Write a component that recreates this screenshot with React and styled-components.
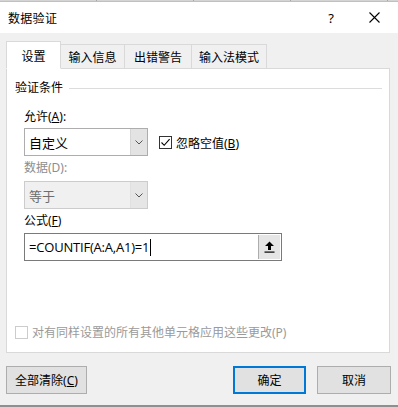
import React from "react";
import styled, { createGlobalStyle } from "styled-components";

const GlobalStyle = createGlobalStyle`
  html, body { margin: 0; padding: 0; }
  body {
    font-family: "Noto Sans", "Noto Sans CJK SC", sans-serif;
    font-size: 12px;
    color: #000;
  }
`;

const tabs = [
  { label: "设置", width: 55, active: true },
  { label: "输入信息", width: 64 },
  { label: "出错警告", width: 67 },
  { label: "输入法模式", width: 75 },
];

export default function App() {
  return (
    <>
      <GlobalStyle />
      <Window>
        <TopEdge />
        <TitleBar>
          <Title>数据验证</Title>
          <TitleButtons>
            <HelpMark>?</HelpMark>
            <svg width="11" height="11" viewBox="0 0 11 11">
              <path d="M0.5 0.5 L10.5 10.5 M10.5 0.5 L0.5 10.5" stroke="#000" strokeWidth="1.1" />
            </svg>
          </TitleButtons>
        </TitleBar>
        <Body>
          <TabStrip>
            {tabs.map((t) => (
              <Tab key={t.label} $active={t.active} $width={t.width}>
                {t.label}
              </Tab>
            ))}
          </TabStrip>
          <Panel>
            <GroupHeader>
              <span>验证条件</span>
              <GroupLine />
            </GroupHeader>
            <FieldLabel $top={14}>
              允许(<u>A</u>):
            </FieldLabel>
            <Row>
              <Select>
                <SelectText>自定义</SelectText>
                <DropButton>
                  <Chevron />
                </DropButton>
              </Select>
              <CheckLine>
                <CheckBox>
                  <svg width="11" height="11" viewBox="0 0 11 11">
                    <path d="M1.5 5.5 L4.2 8.3 L9.6 2.2" fill="none" stroke="#000" strokeWidth="1.1" />
                  </svg>
                </CheckBox>
                <span>
                  忽略空值(<u>B</u>)
                </span>
              </CheckLine>
            </Row>
            <FieldLabel $top={4} $disabled>
              数据(D):
            </FieldLabel>
            <Select $disabled>
              <SelectText $disabled>等于</SelectText>
              <DropButton $disabled>
                <Chevron />
              </DropButton>
            </Select>
            <FieldLabel $top={4}>
              公式(<u>F</u>)
            </FieldLabel>
            <FormulaBox>
              <FormulaText>
                =COUNTIF(A:A,A1)=1<Caret />
              </FormulaText>
              <RefButton>
                <svg width="11" height="12" viewBox="0 0 11 12">
                  <path d="M5.5 0.5 L10 5 L7 5 L7 9 L4 9 L4 5 L1 5 Z" fill="#000" />
                  <rect x="0.5" y="10.5" width="10" height="1.2" fill="#000" />
                </svg>
              </RefButton>
            </FormulaBox>
            <Spacer />
            <BottomCheck>
              <CheckBox $disabled />
              <span>对有同样设置的所有其他单元格应用这些更改(P)</span>
            </BottomCheck>
          </Panel>
        </Body>
        <Footer>
          <Button $width={81}>
            全部清除(<u>C</u>)
          </Button>
          <FooterRight>
            <Button $width={73} $primary>
              确定
            </Button>
            <Button $width={74}>取消</Button>
          </FooterRight>
        </Footer>
      </Window>
    </>
  );
}

function Chevron() {
  return (
    <svg width="8" height="5" viewBox="0 0 8 5">
      <path d="M0.5 0.5 L4 4 L7.5 0.5" fill="none" stroke="#555" strokeWidth="1" />
    </svg>
  );
}

const Window = styled.div`
  width: 398px;
  height: 407px;
  display: flex;
  flex-direction: column;
  background: #f0f0f0;
  border-bottom: 2px solid #8f8f8f;
  box-sizing: border-box;
`;

const TopEdge = styled.div`
  height: 2px;
  background: repeating-linear-gradient(
    to right,
    #d4d4d4 0px,
    #d4d4d4 96px,
    #a8a8a8 96px,
    #a8a8a8 97px
  );
  border-bottom: 1px solid #c0c0c0;
  box-sizing: border-box;
`;

const TitleBar = styled.div`
  height: 31px;
  background: #fff;
  display: flex;
  align-items: center;
  justify-content: space-between;
  padding: 0 18px 0 8px;
`;

const Title = styled.div`
  font-size: 12px;
  letter-spacing: 0.3px;
`;

const TitleButtons = styled.div`
  display: flex;
  align-items: center;
  gap: 35px;
`;

const HelpMark = styled.span`
  font-family: "Noto Sans", sans-serif;
  font-size: 13px;
`;

const Body = styled.div`
  padding: 9px 8px 0 6px;
  display: flex;
  flex-direction: column;
`;

const TabStrip = styled.div`
  display: flex;
  align-items: flex-end;
  height: 27px;
  margin-bottom: -1px;
  position: relative;
  z-index: 1;
`;

const Tab = styled.div`
  width: ${(p) => p.$width}px;
  height: ${(p) => (p.$active ? 28 : 25)}px;
  box-sizing: border-box;
  display: flex;
  align-items: center;
  justify-content: center;
  border: 1px solid #d9d9d9;
  border-left: ${(p) => (p.$active ? "1px solid #d9d9d9" : "none")};
  border-bottom: ${(p) => (p.$active ? "1px solid #fff" : "1px solid #d9d9d9")};
  background: ${(p) => (p.$active ? "#fff" : "#f0f0f0")};
  padding-top: ${(p) => (p.$active ? 2 : 0)}px;
  font-size: 12px;
`;

const Panel = styled.div`
  height: 285px;
  box-sizing: border-box;
  border: 1px solid #d9d9d9;
  background: #fff;
  display: flex;
  flex-direction: column;
  padding: 0 0 12px 17px;
`;

const GroupHeader = styled.div`
  display: flex;
  align-items: center;
  gap: 6px;
  height: 16px;
  margin: 10px 7px 0 -9px;
  font-size: 12px;
`;

const GroupLine = styled.div`
  flex: 1;
  height: 1px;
  background: #dcdcdc;
  margin-top: 3px;
`;

const FieldLabel = styled.div`
  height: 16px;
  line-height: 16px;
  margin-top: ${(p) => p.$top}px;
  margin-bottom: 3px;
  font-size: 12px;
  color: ${(p) => (p.$disabled ? "#8d8d8d" : "#000")};
  u { text-underline-offset: 1px; }
`;

const Row = styled.div`
  display: flex;
  align-items: center;
  gap: 11px;
`;

const Select = styled.div`
  width: 124px;
  height: 28px;
  box-sizing: border-box;
  border: 1px solid ${(p) => (p.$disabled ? "#cccccc" : "#adadad")};
  background: ${(p) => (p.$disabled ? "#f0f0f0" : "#fff")};
  display: flex;
  margin-top: ${(p) => (p.$disabled ? 2 : 0)}px;
`;

const SelectText = styled.div`
  flex: 1;
  display: flex;
  align-items: center;
  padding-left: 4px;
  font-size: 13px;
  color: ${(p) => (p.$disabled ? "#6d6d6d" : "#000")};
`;

const DropButton = styled.div`
  width: 16px;
  display: flex;
  align-items: center;
  justify-content: center;
  background: ${(p) => (p.$disabled ? "#e6e6e6" : "#e3e3e3")};
  border-left: 1px solid ${(p) => (p.$disabled ? "#e0e0e0" : "#d5d5d5")};
`;

const CheckLine = styled.label`
  display: flex;
  align-items: center;
  gap: 4px;
  font-size: 12px;
  margin-top: 1px;
`;

const CheckBox = styled.div`
  width: 13px;
  height: 13px;
  box-sizing: border-box;
  border: 1px solid ${(p) => (p.$disabled ? "#cccccc" : "#333")};
  background: #fff;
  display: flex;
  align-items: center;
  justify-content: center;
`;

const FormulaBox = styled.div`
  width: 258px;
  height: 28px;
  box-sizing: border-box;
  border: 1px solid #7a7a7a;
  display: flex;
  margin-top: 1px;
`;

const FormulaText = styled.div`
  flex: 1;
  display: flex;
  align-items: center;
  padding-left: 4px;
  font-family: "Open Sans", "Noto Sans", sans-serif;
  font-size: 13px;
  letter-spacing: -0.2px;
`;

const Caret = styled.span`
  display: inline-block;
  width: 1px;
  height: 17px;
  background: #000;
  margin-left: 1px;
`;

const RefButton = styled.div`
  width: 21px;
  display: flex;
  align-items: center;
  justify-content: center;
  background: #e5e5e5;
  border-left: 1px solid #adadad;
  margin: 1px;
  margin-left: 0;
`;

const Spacer = styled.div`
  flex: 1;
`;

const BottomCheck = styled.div`
  display: flex;
  align-items: center;
  gap: 4px;
  height: 16px;
  margin-left: -9px;
  font-size: 12px;
  color: #9a9a9a;
`;

const Footer = styled.div`
  display: flex;
  justify-content: space-between;
  padding: 13px 7px 0 6px;
`;

const FooterRight = styled.div`
  display: flex;
  gap: 11px;
`;

const Button = styled.div`
  width: ${(p) => p.$width}px;
  height: 28px;
  box-sizing: border-box;
  display: flex;
  align-items: center;
  justify-content: center;
  background: #e1e1e1;
  border: ${(p) => (p.$primary ? "2px solid #0078d7" : "1px solid #adadad")};
  font-size: 12px;
  u { text-underline-offset: 1px; }
`;
